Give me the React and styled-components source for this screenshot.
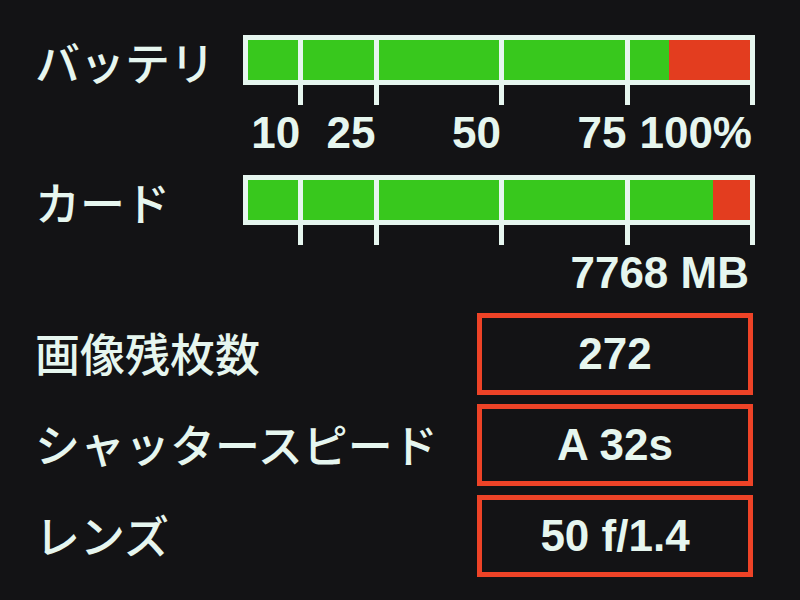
import React from 'react';
import styled, { createGlobalStyle } from 'styled-components';

const INK = '#e6f6ef';
const GREEN = '#38c81d';
const RED = '#e33d1f';
const BOX_RED = '#ee4327';

const GlobalStyle = createGlobalStyle`
  html, body {
    margin: 0;
    padding: 0;
    background: #131315;
  }
`;

const Screen = styled.div`
  width: 800px;
  height: 600px;
  box-sizing: border-box;
  padding: 35px 45px 0 35px;
  background: #131315;
  color: ${INK};
  font-family: "Liberation Sans", Arial, sans-serif;
  overflow: hidden;
`;

const MeterRow = styled.div`
  display: grid;
  grid-template-columns: 208px 512px;
  align-items: start;
  margin-bottom: ${p => p.$gap}px;
`;

const Label = styled.div`
  font-family: "Noto Sans CJK JP", "Noto Sans", sans-serif;
  font-size: 45px;
  font-weight: 500;
  line-height: 50px;
  padding-top: 2px;
  white-space: nowrap;
`;

const Frame = styled.div`
  display: flex;
  gap: 5px;
  height: 50px;
  padding: 5px;
  box-sizing: border-box;
  background: ${INK};
`;

const Cell = styled.div`
  flex: ${p => p.$grow} 1 0;
  min-width: 0;
  background: linear-gradient(90deg, ${GREEN} ${p => p.$split}%, ${RED} ${p => p.$split}%);
`;

const Scale = styled.div`
  display: flex;
  padding-left: 5px;
`;

const Notch = styled.div`
  flex: ${p => p.$grow} 1 5px;
  min-width: 0;
  display: flex;
  flex-direction: column;
  align-items: flex-end;
`;

const Tick = styled.div`
  width: 5px;
  height: 20px;
  background: ${INK};
`;

const TickLabel = styled.span`
  margin-top: 6px;
  margin-right: 3px;
  font-size: 44px;
  font-weight: 700;
  line-height: 44px;
  white-space: nowrap;
`;

const Capacity = styled.div`
  margin-top: 6px;
  margin-right: 6px;
  text-align: right;
  font-size: 44px;
  font-weight: 700;
  line-height: 44px;
`;

const Settings = styled.div`
  display: grid;
  grid-template-columns: 442px 276px;
  row-gap: 9px;
  margin-top: 18px;
`;

const SettingLabel = styled(Label)`
  display: flex;
  align-items: center;
  padding: 0 0 4px 0;
  line-height: 45px;
`;

const ValueBox = styled.div`
  height: 82px;
  box-sizing: border-box;
  border: 5px solid ${BOX_RED};
  display: flex;
  align-items: center;
  justify-content: center;
  font-size: 44px;
  font-weight: 700;
  line-height: 44px;
`;

// scale sections: value range and drawn width share
const sections = [
  { from: 0, to: 10, grow: 10, mark: '10' },
  { from: 10, to: 25, grow: 14, mark: '25' },
  { from: 25, to: 50, grow: 24, mark: '50' },
  { from: 50, to: 75, grow: 24, mark: '75' },
  { from: 75, to: 100, grow: 24, mark: '100%' },
];

const splitFor = (s, level) => {
  if (level >= s.to) return 100;
  if (level <= s.from) return 0;
  return ((level - s.from) / (s.to - s.from)) * 100;
};

const Meter = ({ level, marks, children }) => (
  <div>
    <Frame>
      {sections.map(s => (
        <Cell key={s.to} $grow={s.grow} $split={splitFor(s, level)} />
      ))}
    </Frame>
    <Scale>
      {sections.map(s => (
        <Notch key={s.to} $grow={s.grow}>
          <Tick />
          {marks && <TickLabel>{s.mark}</TickLabel>}
        </Notch>
      ))}
    </Scale>
    {children}
  </div>
);

const settings = [
  { name: '画像残枚数', value: '272' },
  { name: 'シャッタースピード', value: 'A 32s' },
  { name: 'レンズ', value: '50 f/1.4' },
];

const App = () => (
  <>
    <GlobalStyle />
    <Screen>
      <MeterRow $gap={20}>
        <Label>バッテリ</Label>
        <Meter level={83.2} marks />
      </MeterRow>
      <MeterRow $gap={0}>
        <Label>カード</Label>
        <Meter level={92.2}>
          <Capacity>7768 MB</Capacity>
        </Meter>
      </MeterRow>
      <Settings>
        {settings.map(s => (
          <React.Fragment key={s.name}>
            <SettingLabel>{s.name}</SettingLabel>
            <ValueBox>{s.value}</ValueBox>
          </React.Fragment>
        ))}
      </Settings>
    </Screen>
  </>
);

export default App;
